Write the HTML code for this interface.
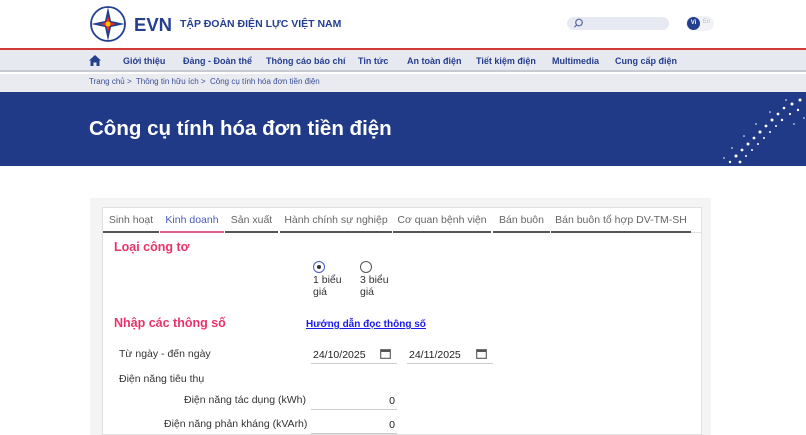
<!DOCTYPE html>
<html><head><meta charset="utf-8"><style>
*{margin:0;padding:0;box-sizing:border-box}
body{width:806px;height:435px;overflow:hidden;background:#fff;font-family:"Liberation Sans",Arial,sans-serif;position:relative}
.a{position:absolute;white-space:nowrap}
.nav span{position:absolute;top:56px;font-size:9px;font-weight:bold;color:#253c8e}
.tab{position:absolute;top:207px;height:26px;font-size:10.5px;color:#666;padding-top:7px;text-align:center;border-bottom:2px solid #555}
.lbl{font-size:10.5px;color:#333}
.inp{position:absolute;border-bottom:1px solid #ccc;font-size:10.5px;color:#222;height:18px}
</style></head><body>
<svg class="a" style="left:89px;top:5px" width="38" height="38" viewBox="0 0 38 38">
<circle cx="19" cy="19" r="17" fill="#fff" stroke="#243e90" stroke-width="1.8"/>
<path d="M19 2 L22 16 L36 19 L22 22 L19 36 L16 22 L2 19 L16 16Z" fill="#243e90"/>
<path d="M19 11 L21 17 L27 19 L21 21 L19 27 L17 21 L11 19 L17 17Z" fill="#e32b2b"/>
<circle cx="19" cy="19" r="2.5" fill="#f5c400"/>
</svg>
<div class="a" style="left:134px;top:14px;font-size:18.5px;font-weight:bold;color:#243e90">EVN</div>
<div class="a" style="left:180px;top:18px;font-size:10.5px;font-weight:bold;color:#243e90">TẬP ĐOÀN ĐIỆN LỰC VIỆT NAM</div>
<div class="a" style="left:567px;top:17px;width:102px;height:13px;border-radius:7px;background:#e8eaf3"></div>
<svg class="a" style="left:574px;top:18px" width="10" height="10"><circle cx="5" cy="4.5" r="3.3" fill="none" stroke="#5a6aa0" stroke-width="1.2"/><path d="M2.6 7 L0.5 9.2" stroke="#5a6aa0" stroke-width="1.2"/></svg>
<div class="a" style="left:686px;top:16px;width:28px;height:15px;border-radius:8px;background:#f2f3f6"></div>
<div class="a" style="left:687px;top:17px;width:13px;height:13px;border-radius:50%;background:#243e90;color:#fff;font-size:6px;text-align:center;line-height:13px;font-weight:bold">Vi</div>
<div class="a" style="left:703px;top:19px;font-size:6px;color:#bbb">En</div>
<div class="a" style="left:0;top:48px;width:806px;height:2px;background:#d23a3a"></div>
<div class="a" style="left:0;top:50px;width:806px;height:22px;background:#e7e9f0;border-bottom:2px solid #c8cad2"></div>
<div class="nav">
<svg class="a" style="left:89px;top:55px" width="12" height="11" viewBox="0 0 12 11"><path d="M6 0 L12 5.5 L10.5 5.5 L10.5 11 L7.5 11 L7.5 7.5 L4.5 7.5 L4.5 11 L1.5 11 L1.5 5.5 L0 5.5Z" fill="#243e90"/></svg>
<span style="left:123px">Giới thiệu</span><span style="left:183px">Đảng - Đoàn thể</span><span style="left:266px">Thông cáo báo chí</span><span style="left:358px">Tin tức</span><span style="left:407px">An toàn điện</span><span style="left:476px">Tiết kiệm điện</span><span style="left:552px">Multimedia</span><span style="left:615px">Cung cấp điện</span>
</div>
<div class="a" style="left:0;top:74px;width:806px;height:18px;background:#e9ebf1"></div>
<div class="a" style="left:89px;top:77px;font-size:8px;color:#3a4f95">Trang chủ &gt;&nbsp; Thông tin hữu ích &gt;&nbsp; Công cụ tính hóa đơn tiền điện</div>
<div class="a" style="left:0;top:92px;width:806px;height:74px;background:#203a88"></div>
<div class="a" style="left:89px;top:117px;font-size:20.5px;font-weight:bold;color:#fff">Công cụ tính hóa đơn tiền điện</div>
<svg class="a" style="left:720px;top:92px" width="86" height="74">
<g fill="#fff">
<circle cx="80" cy="8" r="1.5"/><circle cx="72" cy="12" r="1.5"/><circle cx="64" cy="16" r="1.3"/><circle cx="78" cy="18" r="1.2"/><circle cx="58" cy="22" r="1.4"/><circle cx="70" cy="22" r="1.1"/><circle cx="52" cy="28" r="1.5"/><circle cx="62" cy="28" r="1.2"/><circle cx="46" cy="34" r="1.4"/><circle cx="56" cy="34" r="1"/><circle cx="40" cy="40" r="1.5"/><circle cx="50" cy="40" r="1"/><circle cx="34" cy="46" r="1.4"/><circle cx="44" cy="46" r="1"/><circle cx="28" cy="52" r="1.5"/><circle cx="38" cy="52" r="1"/><circle cx="22" cy="58" r="1.4"/><circle cx="32" cy="58" r="1"/><circle cx="16" cy="64" r="1.5"/><circle cx="26" cy="64" r="1"/><circle cx="10" cy="70" r="1.2"/><circle cx="20" cy="70" r="1.4"/><circle cx="66" cy="8" r="0.8"/><circle cx="50" cy="20" r="0.8"/><circle cx="36" cy="32" r="0.8"/><circle cx="24" cy="44" r="0.8"/><circle cx="12" cy="56" r="0.8"/><circle cx="4" cy="66" r="0.8"/><circle cx="84" cy="26" r="0.8"/><circle cx="74" cy="32" r="0.8"/>
</g></svg>
<div class="a" style="left:90px;top:198px;width:621px;height:237px;background:#f4f4f4"></div>
<div class="a" style="left:102px;top:207px;width:600px;height:228px;background:#fff;border:1px solid #e0e0e0"></div>
<div class="tab" style="left:103px;width:56px">Sinh hoạt</div>
<div class="tab" style="left:160px;width:64px;color:#4a5bc0;border-color:#e0608a">Kinh doanh</div>
<div class="tab" style="left:225px;width:53px">Sản xuất</div>
<div class="tab" style="left:280px;width:112px">Hành chính sự nghiệp</div>
<div class="tab" style="left:393px;width:98px">Cơ quan bệnh viện</div>
<div class="tab" style="left:493px;width:57px">Bán buôn</div>
<div class="tab" style="left:551px;width:140px">Bán buôn tổ hợp DV-TM-SH</div>
<div class="a" style="left:691px;top:232px;width:11px;height:1px;background:#e0e0e0"></div>
<div class="a" style="left:114px;top:240px;font-size:12.5px;font-weight:bold;color:#e8336a">Loại công tơ</div>
<div class="a" style="left:313px;top:261px;width:12px;height:12px;border-radius:50%;border:1.5px solid #4a5bc0"></div>
<div class="a" style="left:317px;top:265px;width:4px;height:4px;border-radius:50%;background:#333"></div>
<div class="a" style="left:360px;top:261px;width:12px;height:12px;border-radius:50%;border:1.2px solid #555"></div>
<div class="a lbl" style="left:313px;top:274px;line-height:12px">1 biểu<br>giá</div>
<div class="a lbl" style="left:360px;top:274px;line-height:12px">3 biểu<br>giá</div>
<div class="a" style="left:114px;top:316px;font-size:12.5px;font-weight:bold;color:#e8336a">Nhập các thông số</div>
<div class="a" style="left:306px;top:319px;font-size:10px;font-weight:bold;color:#1a1aee;text-decoration:underline">Hướng dẫn đọc thông số</div>
<div class="a lbl" style="left:119px;top:348px">Từ ngày - đến ngày</div>
<div class="inp" style="left:311px;top:346px;width:86px;padding:3px 0 0 2px">24/10/2025</div>
<div class="inp" style="left:407px;top:346px;width:86px;padding:3px 0 0 2px">24/11/2025</div>
<svg class="a" style="left:380px;top:348px" width="11" height="11"><rect x="0.7" y="1.7" width="9.6" height="8.6" fill="none" stroke="#555" stroke-width="1.1"/><rect x="0.7" y="1.7" width="9.6" height="2.3" fill="#555"/></svg>
<svg class="a" style="left:476px;top:348px" width="11" height="11"><rect x="0.7" y="1.7" width="9.6" height="8.6" fill="none" stroke="#555" stroke-width="1.1"/><rect x="0.7" y="1.7" width="9.6" height="2.3" fill="#555"/></svg>
<div class="a lbl" style="left:119px;top:373px">Điện năng tiêu thụ</div>
<div class="a lbl" style="left:184px;top:394px">Điện năng tác dụng (kWh)</div>
<div class="inp" style="left:311px;top:392px;width:86px;text-align:right;padding:3px 2px 0 0">0</div>
<div class="a lbl" style="left:164px;top:418px">Điện năng phản kháng (kVArh)</div>
<div class="inp" style="left:311px;top:416px;width:86px;text-align:right;padding:3px 2px 0 0">0</div>
</body></html>
